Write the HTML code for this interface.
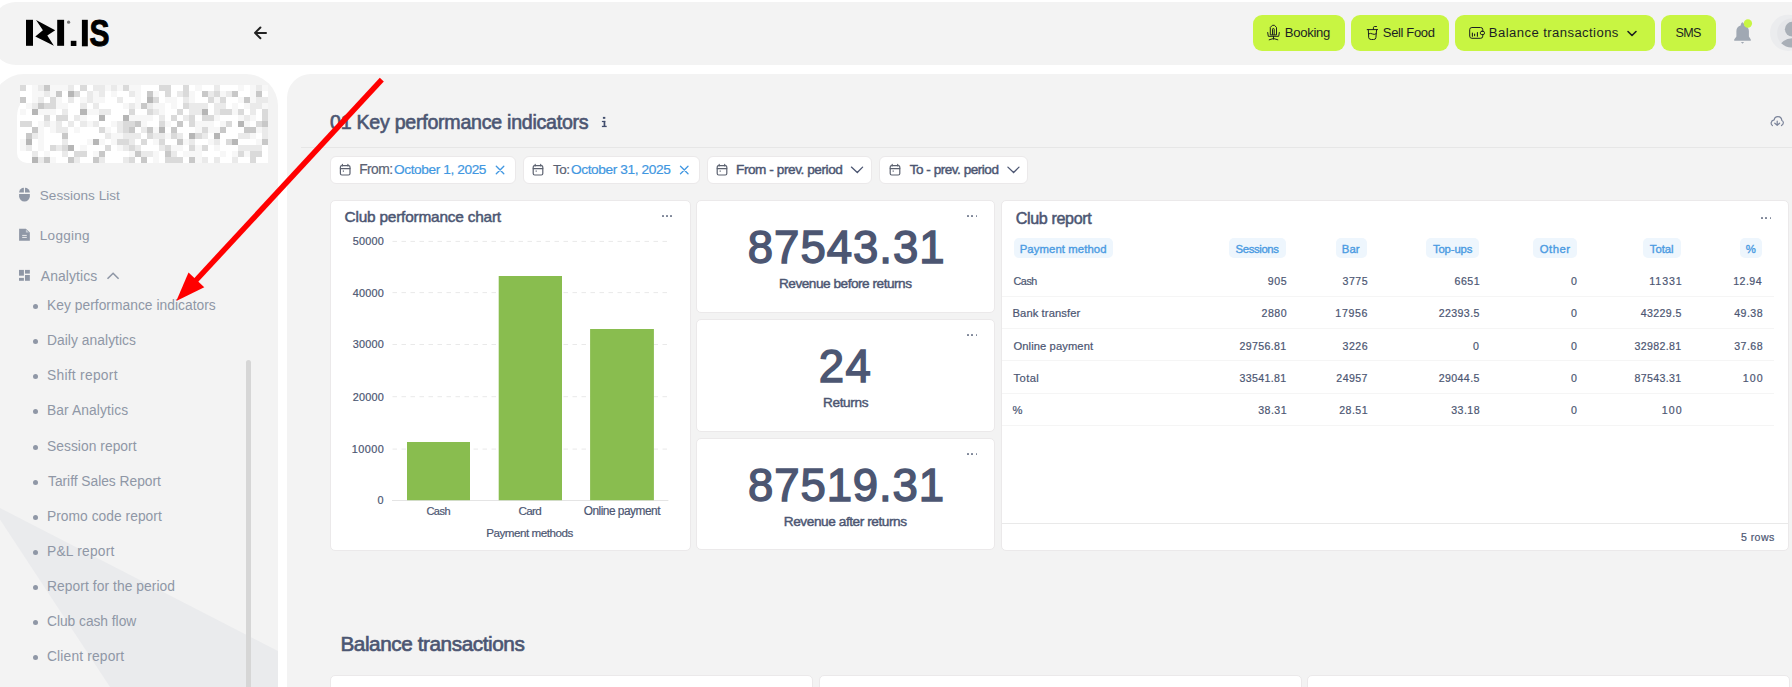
<!DOCTYPE html>
<html><head><meta charset="utf-8"><style>
html,body{margin:0;padding:0}
body{width:1792px;height:687px;overflow:hidden;position:relative;background:#fff;font-family:"Liberation Sans",sans-serif}
.t{position:absolute;white-space:nowrap;font-family:"Liberation Sans",sans-serif}
svg{overflow:visible}
</style></head><body>
<div style="position:absolute;left:-8.00px;top:2.00px;width:1838.00px;height:63.00px;background:#f3f3f3;border-radius:24px;"></div>
<div style="position:absolute;left:-8.00px;top:74.00px;width:286.00px;height:826.00px;background:#f3f3f3;border-radius:32px 32px 0 0;"></div>
<svg style="position:absolute;left:0;top:0" width="278" height="687"><polygon points="0,508 278,651 278,687 110,687 0,519.6" fill="#eaebed"/></svg>
<div style="position:absolute;left:287.00px;top:74.00px;width:1613.00px;height:826.00px;background:#f3f3f3;border-radius:24px 0 0 0;"></div>
<svg style="position:absolute;left:0;top:0" width="120" height="60" viewBox="0 0 120 60">
<rect x="26" y="19.8" width="7" height="26" fill="#000"/>
<polygon points="36.05,20.1 55.2,30.3 47.3,35.4 53.9,45.8 35.3,36.4 42.9,30.3" fill="#000"/>
<rect x="57.2" y="19.8" width="6.9" height="26" fill="#000"/>
<circle cx="68.6" cy="22.2" r="1.6" fill="#777"/>
<rect x="70.8" y="40.8" width="5.6" height="5.2" fill="#000"/>
<rect x="81.9" y="19.8" width="5.9" height="26.5" fill="#000"/>
<text x="89.6" y="46.4" font-family="Liberation Sans" font-weight="700" font-size="37.5" fill="#000" stroke="#000" stroke-width="1" textLength="20" lengthAdjust="spacingAndGlyphs">S</text>
</svg>
<svg style="position:absolute;left:0;top:0" width="300" height="60"><path d="M266 32.9H255.5M260.4 27.5L255 32.9L260.4 38.2" stroke="#222" stroke-width="2" fill="none" stroke-linecap="round" stroke-linejoin="round"/></svg>
<div style="position:absolute;left:1253.00px;top:15.00px;width:92.00px;height:36.00px;background:#c8f542;border-radius:9px;"></div>
<div style="position:absolute;left:1351.00px;top:15.00px;width:98.00px;height:36.00px;background:#c8f542;border-radius:9px;"></div>
<div style="position:absolute;left:1455.00px;top:15.00px;width:200.00px;height:36.00px;background:#c8f542;border-radius:9px;"></div>
<div style="position:absolute;left:1661.00px;top:15.00px;width:55.00px;height:36.00px;background:#c8f542;border-radius:9px;"></div>
<svg style="position:absolute;left:0;top:0" width="1792" height="60" fill="none" stroke="#1c1f22" stroke-width="1" stroke-linecap="round" stroke-linejoin="round">
<path d="M1270.3 34.5V27.4L1272.4 25.3H1274.4L1276.5 27.4V34.5Z"/>
<path d="M1272.5 34.5V29.2Q1272.5 28.5 1273.2 28.5H1273.5Q1274.2 28.5 1274.2 29.2V34.5"/>
<path d="M1267.7 32.5L1268.3 36.3H1278.7L1279.3 32.5"/>
<path d="M1273.5 36.3V39.2M1269.2 39.8L1273.5 38.5L1277.8 39.8"/>
<path d="M1367.2 29.6H1377.6M1368.3 29.6L1368.7 37.7Q1369 39.5 1371.4 39.5H1373.6Q1375.8 39.5 1375.9 37.7L1376.6 29.6M1373.3 29.6L1373.5 27.3Q1373.7 26.5 1374.5 26.5H1376.5M1368.6 33.9Q1370.6 32.8 1372.3 33.9Q1374 35 1376.2 33.8"/>
<path d="M1482.8 31.3V29.7A2.2 2.2 0 0 0 1480.6 27.5H1471.9A2.2 2.2 0 0 0 1469.7 29.7V36.1A2.2 2.2 0 0 0 1471.9 38.3H1480.6A2.2 2.2 0 0 0 1482.8 36.1V34.6"/>
<rect x="1480.3" y="31.3" width="4.2" height="3.3" rx="1.5"/>
<path d="M1472.4 33V36.2M1474.6 34V35.6M1477.4 32.5V36.3" stroke-width="1.1"/>
<path d="M1628 31.5L1632 35.5L1636 31.5" stroke-width="1.6"/>
</svg>
<svg style="position:absolute;left:0;top:0" width="1792" height="60">
<defs><clipPath id="av"><circle cx="1791.6" cy="33" r="14.6"/></clipPath></defs>
<path d="M1742.5 22.2C1741.3 22.2 1740.8 24.5 1740.6 25.6C1738 26.4 1736.4 28.3 1736.4 31V36.4L1734.2 39.4V40.7H1750.8V39.4L1748.9 36.4V31C1748.9 28.3 1747.2 26.4 1744.5 25.6C1744.2 24.5 1743.7 22.2 1742.5 22.2Z" fill="#a0a8b3"/>
<path d="M1740.9 42H1744.1L1742.5 43.8Z" fill="#a0a8b3"/>
<circle cx="1747.9" cy="23.5" r="4.15" fill="#c8f542"/>
<circle cx="1788.1" cy="32.8" r="18.1" fill="#ebecee"/>
<circle cx="1791.6" cy="33" r="14.6" fill="#e5e6e9"/>
<g clip-path="url(#av)"><circle cx="1792.3" cy="29.2" r="7.4" fill="#a9afb7"/><ellipse cx="1792.5" cy="47.5" rx="12.6" ry="9.3" fill="#a9afb7"/></g>
</svg>
<svg style="position:absolute;left:0;top:0" width="280" height="170" shape-rendering="crispEdges"><path d="M20 85H268V163H27A10 10 0 0 1 17 153V116Q17.5 108 20 105Z" fill="#fff" shape-rendering="auto"/><rect x="20" y="85" width="6" height="6" fill="rgb(218,218,218)"/><rect x="32" y="85" width="6" height="6" fill="rgb(247,247,247)"/><rect x="38" y="85" width="6" height="6" fill="rgb(234,234,234)"/><rect x="44" y="85" width="6" height="6" fill="rgb(200,200,200)"/><rect x="50" y="85" width="6" height="6" fill="rgb(247,247,247)"/><rect x="56" y="85" width="6" height="6" fill="rgb(247,247,247)"/><rect x="62" y="85" width="6" height="6" fill="rgb(247,247,247)"/><rect x="68" y="85" width="6" height="6" fill="rgb(234,234,234)"/><rect x="80" y="85" width="7" height="6" fill="rgb(218,218,218)"/><rect x="93" y="85" width="6" height="6" fill="rgb(234,234,234)"/><rect x="99" y="85" width="6" height="6" fill="rgb(234,234,234)"/><rect x="105" y="85" width="6" height="6" fill="rgb(247,247,247)"/><rect x="111" y="85" width="6" height="6" fill="rgb(234,234,234)"/><rect x="117" y="85" width="6" height="6" fill="rgb(247,247,247)"/><rect x="123" y="85" width="6" height="6" fill="rgb(218,218,218)"/><rect x="129" y="85" width="6" height="6" fill="rgb(247,247,247)"/><rect x="135" y="85" width="6" height="6" fill="rgb(247,247,247)"/><rect x="159" y="85" width="6" height="6" fill="rgb(218,218,218)"/><rect x="165" y="85" width="6" height="6" fill="rgb(218,218,218)"/><rect x="183" y="85" width="6" height="6" fill="rgb(218,218,218)"/><rect x="195" y="85" width="7" height="6" fill="rgb(247,247,247)"/><rect x="214" y="85" width="6" height="6" fill="rgb(234,234,234)"/><rect x="238" y="85" width="6" height="6" fill="rgb(247,247,247)"/><rect x="250" y="85" width="6" height="6" fill="rgb(247,247,247)"/><rect x="256" y="85" width="6" height="6" fill="rgb(234,234,234)"/><rect x="262" y="85" width="6" height="6" fill="rgb(247,247,247)"/><rect x="32" y="91" width="6" height="6" fill="rgb(247,247,247)"/><rect x="38" y="91" width="6" height="6" fill="rgb(247,247,247)"/><rect x="44" y="91" width="6" height="6" fill="rgb(234,234,234)"/><rect x="50" y="91" width="6" height="6" fill="rgb(247,247,247)"/><rect x="56" y="91" width="6" height="6" fill="rgb(200,200,200)"/><rect x="68" y="91" width="6" height="6" fill="rgb(182,182,182)"/><rect x="74" y="91" width="6" height="6" fill="rgb(218,218,218)"/><rect x="87" y="91" width="6" height="6" fill="rgb(234,234,234)"/><rect x="93" y="91" width="6" height="6" fill="rgb(247,247,247)"/><rect x="99" y="91" width="6" height="6" fill="rgb(234,234,234)"/><rect x="111" y="91" width="6" height="6" fill="rgb(247,247,247)"/><rect x="129" y="91" width="6" height="6" fill="rgb(234,234,234)"/><rect x="135" y="91" width="6" height="6" fill="rgb(247,247,247)"/><rect x="147" y="91" width="6" height="6" fill="rgb(200,200,200)"/><rect x="153" y="91" width="6" height="6" fill="rgb(247,247,247)"/><rect x="165" y="91" width="6" height="6" fill="rgb(218,218,218)"/><rect x="177" y="91" width="6" height="6" fill="rgb(234,234,234)"/><rect x="183" y="91" width="6" height="6" fill="rgb(218,218,218)"/><rect x="189" y="91" width="6" height="6" fill="rgb(247,247,247)"/><rect x="202" y="91" width="6" height="6" fill="rgb(200,200,200)"/><rect x="208" y="91" width="6" height="6" fill="rgb(234,234,234)"/><rect x="214" y="91" width="6" height="6" fill="rgb(218,218,218)"/><rect x="220" y="91" width="6" height="6" fill="rgb(247,247,247)"/><rect x="226" y="91" width="6" height="6" fill="rgb(234,234,234)"/><rect x="232" y="91" width="6" height="6" fill="rgb(200,200,200)"/><rect x="250" y="91" width="6" height="6" fill="rgb(247,247,247)"/><rect x="256" y="91" width="6" height="6" fill="rgb(200,200,200)"/><rect x="20" y="97" width="6" height="6" fill="rgb(200,200,200)"/><rect x="32" y="97" width="6" height="6" fill="rgb(247,247,247)"/><rect x="38" y="97" width="6" height="6" fill="rgb(234,234,234)"/><rect x="50" y="97" width="6" height="6" fill="rgb(218,218,218)"/><rect x="56" y="97" width="6" height="6" fill="rgb(247,247,247)"/><rect x="68" y="97" width="6" height="6" fill="rgb(234,234,234)"/><rect x="80" y="97" width="7" height="6" fill="rgb(247,247,247)"/><rect x="87" y="97" width="6" height="6" fill="rgb(234,234,234)"/><rect x="93" y="97" width="6" height="6" fill="rgb(247,247,247)"/><rect x="99" y="97" width="6" height="6" fill="rgb(247,247,247)"/><rect x="117" y="97" width="6" height="6" fill="rgb(234,234,234)"/><rect x="135" y="97" width="6" height="6" fill="rgb(247,247,247)"/><rect x="147" y="97" width="6" height="6" fill="rgb(182,182,182)"/><rect x="153" y="97" width="6" height="6" fill="rgb(218,218,218)"/><rect x="165" y="97" width="6" height="6" fill="rgb(247,247,247)"/><rect x="171" y="97" width="6" height="6" fill="rgb(247,247,247)"/><rect x="183" y="97" width="6" height="6" fill="rgb(234,234,234)"/><rect x="189" y="97" width="6" height="6" fill="rgb(247,247,247)"/><rect x="208" y="97" width="6" height="6" fill="rgb(218,218,218)"/><rect x="214" y="97" width="6" height="6" fill="rgb(247,247,247)"/><rect x="220" y="97" width="6" height="6" fill="rgb(218,218,218)"/><rect x="238" y="97" width="6" height="6" fill="rgb(247,247,247)"/><rect x="244" y="97" width="6" height="6" fill="rgb(200,200,200)"/><rect x="250" y="97" width="6" height="6" fill="rgb(247,247,247)"/><rect x="256" y="97" width="6" height="6" fill="rgb(234,234,234)"/><rect x="262" y="97" width="6" height="6" fill="rgb(234,234,234)"/><rect x="26" y="103" width="6" height="6" fill="rgb(247,247,247)"/><rect x="32" y="103" width="6" height="6" fill="rgb(234,234,234)"/><rect x="38" y="103" width="6" height="6" fill="rgb(200,200,200)"/><rect x="44" y="103" width="6" height="6" fill="rgb(218,218,218)"/><rect x="50" y="103" width="6" height="6" fill="rgb(218,218,218)"/><rect x="56" y="103" width="6" height="6" fill="rgb(247,247,247)"/><rect x="62" y="103" width="6" height="6" fill="rgb(247,247,247)"/><rect x="80" y="103" width="7" height="6" fill="rgb(234,234,234)"/><rect x="93" y="103" width="6" height="6" fill="rgb(234,234,234)"/><rect x="123" y="103" width="6" height="6" fill="rgb(247,247,247)"/><rect x="129" y="103" width="6" height="6" fill="rgb(234,234,234)"/><rect x="135" y="103" width="6" height="6" fill="rgb(247,247,247)"/><rect x="141" y="103" width="6" height="6" fill="rgb(200,200,200)"/><rect x="147" y="103" width="6" height="6" fill="rgb(234,234,234)"/><rect x="153" y="103" width="6" height="6" fill="rgb(247,247,247)"/><rect x="159" y="103" width="6" height="6" fill="rgb(247,247,247)"/><rect x="171" y="103" width="6" height="6" fill="rgb(247,247,247)"/><rect x="183" y="103" width="6" height="6" fill="rgb(218,218,218)"/><rect x="189" y="103" width="6" height="6" fill="rgb(234,234,234)"/><rect x="195" y="103" width="7" height="6" fill="rgb(234,234,234)"/><rect x="202" y="103" width="6" height="6" fill="rgb(234,234,234)"/><rect x="214" y="103" width="6" height="6" fill="rgb(234,234,234)"/><rect x="220" y="103" width="6" height="6" fill="rgb(234,234,234)"/><rect x="232" y="103" width="6" height="6" fill="rgb(247,247,247)"/><rect x="244" y="103" width="6" height="6" fill="rgb(247,247,247)"/><rect x="250" y="103" width="6" height="6" fill="rgb(234,234,234)"/><rect x="256" y="103" width="6" height="6" fill="rgb(234,234,234)"/><rect x="262" y="103" width="6" height="6" fill="rgb(247,247,247)"/><rect x="20" y="109" width="6" height="6" fill="rgb(247,247,247)"/><rect x="32" y="109" width="6" height="6" fill="rgb(182,182,182)"/><rect x="38" y="109" width="6" height="6" fill="rgb(247,247,247)"/><rect x="44" y="109" width="6" height="6" fill="rgb(247,247,247)"/><rect x="50" y="109" width="6" height="6" fill="rgb(247,247,247)"/><rect x="62" y="109" width="6" height="6" fill="rgb(234,234,234)"/><rect x="80" y="109" width="7" height="6" fill="rgb(182,182,182)"/><rect x="87" y="109" width="6" height="6" fill="rgb(247,247,247)"/><rect x="93" y="109" width="6" height="6" fill="rgb(247,247,247)"/><rect x="99" y="109" width="6" height="6" fill="rgb(234,234,234)"/><rect x="105" y="109" width="6" height="6" fill="rgb(234,234,234)"/><rect x="129" y="109" width="6" height="6" fill="rgb(218,218,218)"/><rect x="147" y="109" width="6" height="6" fill="rgb(218,218,218)"/><rect x="153" y="109" width="6" height="6" fill="rgb(234,234,234)"/><rect x="159" y="109" width="6" height="6" fill="rgb(247,247,247)"/><rect x="177" y="109" width="6" height="6" fill="rgb(218,218,218)"/><rect x="189" y="109" width="6" height="6" fill="rgb(234,234,234)"/><rect x="195" y="109" width="7" height="6" fill="rgb(234,234,234)"/><rect x="202" y="109" width="6" height="6" fill="rgb(182,182,182)"/><rect x="214" y="109" width="6" height="6" fill="rgb(234,234,234)"/><rect x="220" y="109" width="6" height="6" fill="rgb(218,218,218)"/><rect x="226" y="109" width="6" height="6" fill="rgb(218,218,218)"/><rect x="232" y="109" width="6" height="6" fill="rgb(247,247,247)"/><rect x="238" y="109" width="6" height="6" fill="rgb(218,218,218)"/><rect x="250" y="109" width="6" height="6" fill="rgb(234,234,234)"/><rect x="262" y="109" width="6" height="6" fill="rgb(218,218,218)"/><rect x="44" y="115" width="6" height="6" fill="rgb(218,218,218)"/><rect x="56" y="115" width="6" height="6" fill="rgb(218,218,218)"/><rect x="62" y="115" width="6" height="6" fill="rgb(218,218,218)"/><rect x="74" y="115" width="6" height="6" fill="rgb(234,234,234)"/><rect x="80" y="115" width="7" height="6" fill="rgb(247,247,247)"/><rect x="99" y="115" width="6" height="6" fill="rgb(182,182,182)"/><rect x="123" y="115" width="6" height="6" fill="rgb(182,182,182)"/><rect x="129" y="115" width="6" height="6" fill="rgb(247,247,247)"/><rect x="135" y="115" width="6" height="6" fill="rgb(247,247,247)"/><rect x="141" y="115" width="6" height="6" fill="rgb(247,247,247)"/><rect x="147" y="115" width="6" height="6" fill="rgb(247,247,247)"/><rect x="159" y="115" width="6" height="6" fill="rgb(234,234,234)"/><rect x="171" y="115" width="6" height="6" fill="rgb(218,218,218)"/><rect x="183" y="115" width="6" height="6" fill="rgb(234,234,234)"/><rect x="189" y="115" width="6" height="6" fill="rgb(218,218,218)"/><rect x="202" y="115" width="6" height="6" fill="rgb(218,218,218)"/><rect x="208" y="115" width="6" height="6" fill="rgb(218,218,218)"/><rect x="214" y="115" width="6" height="6" fill="rgb(247,247,247)"/><rect x="238" y="115" width="6" height="6" fill="rgb(247,247,247)"/><rect x="244" y="115" width="6" height="6" fill="rgb(234,234,234)"/><rect x="250" y="115" width="6" height="6" fill="rgb(247,247,247)"/><rect x="262" y="115" width="6" height="6" fill="rgb(218,218,218)"/><rect x="20" y="121" width="6" height="6" fill="rgb(218,218,218)"/><rect x="26" y="121" width="6" height="6" fill="rgb(218,218,218)"/><rect x="38" y="121" width="6" height="6" fill="rgb(247,247,247)"/><rect x="44" y="121" width="6" height="6" fill="rgb(234,234,234)"/><rect x="50" y="121" width="6" height="6" fill="rgb(247,247,247)"/><rect x="56" y="121" width="6" height="6" fill="rgb(234,234,234)"/><rect x="68" y="121" width="6" height="6" fill="rgb(234,234,234)"/><rect x="80" y="121" width="7" height="6" fill="rgb(234,234,234)"/><rect x="87" y="121" width="6" height="6" fill="rgb(247,247,247)"/><rect x="93" y="121" width="6" height="6" fill="rgb(234,234,234)"/><rect x="111" y="121" width="6" height="6" fill="rgb(247,247,247)"/><rect x="117" y="121" width="6" height="6" fill="rgb(234,234,234)"/><rect x="123" y="121" width="6" height="6" fill="rgb(218,218,218)"/><rect x="129" y="121" width="6" height="6" fill="rgb(218,218,218)"/><rect x="135" y="121" width="6" height="6" fill="rgb(200,200,200)"/><rect x="141" y="121" width="6" height="6" fill="rgb(247,247,247)"/><rect x="159" y="121" width="6" height="6" fill="rgb(218,218,218)"/><rect x="165" y="121" width="6" height="6" fill="rgb(247,247,247)"/><rect x="177" y="121" width="6" height="6" fill="rgb(200,200,200)"/><rect x="189" y="121" width="6" height="6" fill="rgb(218,218,218)"/><rect x="195" y="121" width="7" height="6" fill="rgb(247,247,247)"/><rect x="202" y="121" width="6" height="6" fill="rgb(247,247,247)"/><rect x="208" y="121" width="6" height="6" fill="rgb(247,247,247)"/><rect x="220" y="121" width="6" height="6" fill="rgb(247,247,247)"/><rect x="226" y="121" width="6" height="6" fill="rgb(218,218,218)"/><rect x="238" y="121" width="6" height="6" fill="rgb(182,182,182)"/><rect x="244" y="121" width="6" height="6" fill="rgb(247,247,247)"/><rect x="256" y="121" width="6" height="6" fill="rgb(218,218,218)"/><rect x="262" y="121" width="6" height="6" fill="rgb(200,200,200)"/><rect x="32" y="127" width="6" height="6" fill="rgb(200,200,200)"/><rect x="38" y="127" width="6" height="6" fill="rgb(247,247,247)"/><rect x="50" y="127" width="6" height="6" fill="rgb(247,247,247)"/><rect x="56" y="127" width="6" height="6" fill="rgb(234,234,234)"/><rect x="62" y="127" width="6" height="6" fill="rgb(234,234,234)"/><rect x="74" y="127" width="6" height="6" fill="rgb(247,247,247)"/><rect x="99" y="127" width="6" height="6" fill="rgb(218,218,218)"/><rect x="105" y="127" width="6" height="6" fill="rgb(247,247,247)"/><rect x="117" y="127" width="6" height="6" fill="rgb(234,234,234)"/><rect x="123" y="127" width="6" height="6" fill="rgb(218,218,218)"/><rect x="129" y="127" width="6" height="6" fill="rgb(200,200,200)"/><rect x="141" y="127" width="6" height="6" fill="rgb(234,234,234)"/><rect x="147" y="127" width="6" height="6" fill="rgb(200,200,200)"/><rect x="153" y="127" width="6" height="6" fill="rgb(247,247,247)"/><rect x="159" y="127" width="6" height="6" fill="rgb(182,182,182)"/><rect x="171" y="127" width="6" height="6" fill="rgb(200,200,200)"/><rect x="195" y="127" width="7" height="6" fill="rgb(247,247,247)"/><rect x="202" y="127" width="6" height="6" fill="rgb(218,218,218)"/><rect x="208" y="127" width="6" height="6" fill="rgb(247,247,247)"/><rect x="214" y="127" width="6" height="6" fill="rgb(247,247,247)"/><rect x="220" y="127" width="6" height="6" fill="rgb(200,200,200)"/><rect x="244" y="127" width="6" height="6" fill="rgb(200,200,200)"/><rect x="250" y="127" width="6" height="6" fill="rgb(200,200,200)"/><rect x="256" y="127" width="6" height="6" fill="rgb(247,247,247)"/><rect x="262" y="127" width="6" height="6" fill="rgb(234,234,234)"/><rect x="26" y="133" width="6" height="6" fill="rgb(200,200,200)"/><rect x="32" y="133" width="6" height="6" fill="rgb(234,234,234)"/><rect x="38" y="133" width="6" height="6" fill="rgb(247,247,247)"/><rect x="62" y="133" width="6" height="6" fill="rgb(200,200,200)"/><rect x="105" y="133" width="6" height="6" fill="rgb(234,234,234)"/><rect x="111" y="133" width="6" height="6" fill="rgb(247,247,247)"/><rect x="117" y="133" width="6" height="6" fill="rgb(247,247,247)"/><rect x="123" y="133" width="6" height="6" fill="rgb(234,234,234)"/><rect x="129" y="133" width="6" height="6" fill="rgb(234,234,234)"/><rect x="135" y="133" width="6" height="6" fill="rgb(234,234,234)"/><rect x="147" y="133" width="6" height="6" fill="rgb(218,218,218)"/><rect x="153" y="133" width="6" height="6" fill="rgb(234,234,234)"/><rect x="159" y="133" width="6" height="6" fill="rgb(234,234,234)"/><rect x="165" y="133" width="6" height="6" fill="rgb(247,247,247)"/><rect x="171" y="133" width="6" height="6" fill="rgb(218,218,218)"/><rect x="177" y="133" width="6" height="6" fill="rgb(234,234,234)"/><rect x="189" y="133" width="6" height="6" fill="rgb(182,182,182)"/><rect x="195" y="133" width="7" height="6" fill="rgb(218,218,218)"/><rect x="202" y="133" width="6" height="6" fill="rgb(234,234,234)"/><rect x="214" y="133" width="6" height="6" fill="rgb(182,182,182)"/><rect x="238" y="133" width="6" height="6" fill="rgb(234,234,234)"/><rect x="244" y="133" width="6" height="6" fill="rgb(234,234,234)"/><rect x="250" y="133" width="6" height="6" fill="rgb(247,247,247)"/><rect x="262" y="133" width="6" height="6" fill="rgb(234,234,234)"/><rect x="20" y="139" width="6" height="6" fill="rgb(247,247,247)"/><rect x="26" y="139" width="6" height="6" fill="rgb(182,182,182)"/><rect x="38" y="139" width="6" height="6" fill="rgb(247,247,247)"/><rect x="62" y="139" width="6" height="6" fill="rgb(234,234,234)"/><rect x="87" y="139" width="6" height="6" fill="rgb(247,247,247)"/><rect x="93" y="139" width="6" height="6" fill="rgb(182,182,182)"/><rect x="99" y="139" width="6" height="6" fill="rgb(247,247,247)"/><rect x="111" y="139" width="6" height="6" fill="rgb(247,247,247)"/><rect x="117" y="139" width="6" height="6" fill="rgb(218,218,218)"/><rect x="123" y="139" width="6" height="6" fill="rgb(218,218,218)"/><rect x="129" y="139" width="6" height="6" fill="rgb(234,234,234)"/><rect x="141" y="139" width="6" height="6" fill="rgb(218,218,218)"/><rect x="153" y="139" width="6" height="6" fill="rgb(247,247,247)"/><rect x="159" y="139" width="6" height="6" fill="rgb(218,218,218)"/><rect x="177" y="139" width="6" height="6" fill="rgb(200,200,200)"/><rect x="183" y="139" width="6" height="6" fill="rgb(247,247,247)"/><rect x="189" y="139" width="6" height="6" fill="rgb(234,234,234)"/><rect x="208" y="139" width="6" height="6" fill="rgb(247,247,247)"/><rect x="214" y="139" width="6" height="6" fill="rgb(234,234,234)"/><rect x="226" y="139" width="6" height="6" fill="rgb(218,218,218)"/><rect x="232" y="139" width="6" height="6" fill="rgb(182,182,182)"/><rect x="256" y="139" width="6" height="6" fill="rgb(247,247,247)"/><rect x="262" y="139" width="6" height="6" fill="rgb(200,200,200)"/><rect x="20" y="145" width="6" height="6" fill="rgb(247,247,247)"/><rect x="26" y="145" width="6" height="6" fill="rgb(234,234,234)"/><rect x="38" y="145" width="6" height="6" fill="rgb(247,247,247)"/><rect x="50" y="145" width="6" height="6" fill="rgb(218,218,218)"/><rect x="56" y="145" width="6" height="6" fill="rgb(234,234,234)"/><rect x="62" y="145" width="6" height="6" fill="rgb(218,218,218)"/><rect x="68" y="145" width="6" height="6" fill="rgb(182,182,182)"/><rect x="80" y="145" width="7" height="6" fill="rgb(247,247,247)"/><rect x="105" y="145" width="6" height="6" fill="rgb(218,218,218)"/><rect x="117" y="145" width="6" height="6" fill="rgb(247,247,247)"/><rect x="123" y="145" width="6" height="6" fill="rgb(234,234,234)"/><rect x="129" y="145" width="6" height="6" fill="rgb(218,218,218)"/><rect x="135" y="145" width="6" height="6" fill="rgb(234,234,234)"/><rect x="159" y="145" width="6" height="6" fill="rgb(234,234,234)"/><rect x="165" y="145" width="6" height="6" fill="rgb(218,218,218)"/><rect x="171" y="145" width="6" height="6" fill="rgb(247,247,247)"/><rect x="177" y="145" width="6" height="6" fill="rgb(247,247,247)"/><rect x="189" y="145" width="6" height="6" fill="rgb(218,218,218)"/><rect x="195" y="145" width="7" height="6" fill="rgb(247,247,247)"/><rect x="202" y="145" width="6" height="6" fill="rgb(218,218,218)"/><rect x="214" y="145" width="6" height="6" fill="rgb(247,247,247)"/><rect x="238" y="145" width="6" height="6" fill="rgb(234,234,234)"/><rect x="244" y="145" width="6" height="6" fill="rgb(234,234,234)"/><rect x="250" y="145" width="6" height="6" fill="rgb(234,234,234)"/><rect x="256" y="145" width="6" height="6" fill="rgb(234,234,234)"/><rect x="32" y="151" width="6" height="6" fill="rgb(234,234,234)"/><rect x="44" y="151" width="6" height="6" fill="rgb(247,247,247)"/><rect x="62" y="151" width="6" height="6" fill="rgb(234,234,234)"/><rect x="74" y="151" width="6" height="6" fill="rgb(218,218,218)"/><rect x="80" y="151" width="7" height="6" fill="rgb(218,218,218)"/><rect x="93" y="151" width="6" height="6" fill="rgb(247,247,247)"/><rect x="99" y="151" width="6" height="6" fill="rgb(200,200,200)"/><rect x="129" y="151" width="6" height="6" fill="rgb(247,247,247)"/><rect x="135" y="151" width="6" height="6" fill="rgb(200,200,200)"/><rect x="141" y="151" width="6" height="6" fill="rgb(234,234,234)"/><rect x="147" y="151" width="6" height="6" fill="rgb(234,234,234)"/><rect x="153" y="151" width="6" height="6" fill="rgb(247,247,247)"/><rect x="165" y="151" width="6" height="6" fill="rgb(200,200,200)"/><rect x="171" y="151" width="6" height="6" fill="rgb(234,234,234)"/><rect x="183" y="151" width="6" height="6" fill="rgb(247,247,247)"/><rect x="189" y="151" width="6" height="6" fill="rgb(247,247,247)"/><rect x="195" y="151" width="7" height="6" fill="rgb(247,247,247)"/><rect x="220" y="151" width="6" height="6" fill="rgb(247,247,247)"/><rect x="232" y="151" width="6" height="6" fill="rgb(247,247,247)"/><rect x="238" y="151" width="6" height="6" fill="rgb(218,218,218)"/><rect x="244" y="151" width="6" height="6" fill="rgb(247,247,247)"/><rect x="250" y="151" width="6" height="6" fill="rgb(218,218,218)"/><rect x="256" y="151" width="6" height="6" fill="rgb(218,218,218)"/><rect x="32" y="157" width="6" height="6" fill="rgb(182,182,182)"/><rect x="38" y="157" width="6" height="6" fill="rgb(234,234,234)"/><rect x="44" y="157" width="6" height="6" fill="rgb(200,200,200)"/><rect x="50" y="157" width="6" height="6" fill="rgb(247,247,247)"/><rect x="68" y="157" width="6" height="6" fill="rgb(200,200,200)"/><rect x="74" y="157" width="6" height="6" fill="rgb(234,234,234)"/><rect x="93" y="157" width="6" height="6" fill="rgb(200,200,200)"/><rect x="99" y="157" width="6" height="6" fill="rgb(234,234,234)"/><rect x="123" y="157" width="6" height="6" fill="rgb(234,234,234)"/><rect x="129" y="157" width="6" height="6" fill="rgb(218,218,218)"/><rect x="141" y="157" width="6" height="6" fill="rgb(200,200,200)"/><rect x="153" y="157" width="6" height="6" fill="rgb(247,247,247)"/><rect x="165" y="157" width="6" height="6" fill="rgb(218,218,218)"/><rect x="171" y="157" width="6" height="6" fill="rgb(218,218,218)"/><rect x="177" y="157" width="6" height="6" fill="rgb(218,218,218)"/><rect x="189" y="157" width="6" height="6" fill="rgb(200,200,200)"/><rect x="195" y="157" width="7" height="6" fill="rgb(247,247,247)"/><rect x="202" y="157" width="6" height="6" fill="rgb(234,234,234)"/><rect x="214" y="157" width="6" height="6" fill="rgb(234,234,234)"/><rect x="232" y="157" width="6" height="6" fill="rgb(234,234,234)"/><rect x="250" y="157" width="6" height="6" fill="rgb(218,218,218)"/></svg>
<svg style="position:absolute;left:0;top:0" width="278" height="300" fill="#8f97a6">
<path d="M19.1 192.6A4.8 4.8 0 0 1 23.9 187.8V192.6Z"/>
<path d="M25 187.8A4.85 4.8 0 0 1 29.85 192.6H25Z"/>
<path d="M19.1 193.9H29.85V196.2A5.375 5.3 0 0 1 19.1 196.2Z"/>
<path d="M19.1 228.8H25.85L29.85 232.5V240.8H19.1Z"/>
<path d="M25.85 229.6V232.5H28.9Z" fill="#c7ccd4"/>
<path d="M22.2 235.4H26.8M22.2 237.4H26.8" stroke="#f3f3f3" stroke-width="0.9"/>
<rect x="19" y="269.9" width="4.9" height="5.8"/><rect x="19" y="277.9" width="4.9" height="2.9"/>
<rect x="25" y="269.9" width="4.85" height="3.7"/><rect x="25" y="275" width="4.85" height="5.8"/>
<path d="M107.5 278.8L113.1 273.3L118.6 278.8" stroke="#8f97a6" stroke-width="1.6" fill="none"/>
</svg>
<div style="position:absolute;left:32.9px;top:304.00px;width:5px;height:5px;border-radius:50%;background:#8f97a6"></div>
<div style="position:absolute;left:32.9px;top:339.13px;width:5px;height:5px;border-radius:50%;background:#8f97a6"></div>
<div style="position:absolute;left:32.9px;top:374.26px;width:5px;height:5px;border-radius:50%;background:#8f97a6"></div>
<div style="position:absolute;left:32.9px;top:409.39px;width:5px;height:5px;border-radius:50%;background:#8f97a6"></div>
<div style="position:absolute;left:32.9px;top:444.52px;width:5px;height:5px;border-radius:50%;background:#8f97a6"></div>
<div style="position:absolute;left:32.9px;top:479.65px;width:5px;height:5px;border-radius:50%;background:#8f97a6"></div>
<div style="position:absolute;left:32.9px;top:514.78px;width:5px;height:5px;border-radius:50%;background:#8f97a6"></div>
<div style="position:absolute;left:32.9px;top:549.91px;width:5px;height:5px;border-radius:50%;background:#8f97a6"></div>
<div style="position:absolute;left:32.9px;top:585.04px;width:5px;height:5px;border-radius:50%;background:#8f97a6"></div>
<div style="position:absolute;left:32.9px;top:620.17px;width:5px;height:5px;border-radius:50%;background:#8f97a6"></div>
<div style="position:absolute;left:32.9px;top:655.30px;width:5px;height:5px;border-radius:50%;background:#8f97a6"></div>
<div style="position:absolute;left:246.00px;top:360.00px;width:5.00px;height:340.00px;background:#d6d6d6;border-radius:2.5px;"></div>
<div style="position:absolute;left:301.00px;top:146.50px;width:1491.00px;height:1.00px;background:#e6e6e6;border-radius:0px;"></div>
<svg style="position:absolute;left:0;top:0" width="700" height="140" fill="#404c6c"><rect x="602.9" y="116.9" width="2.4" height="1.9"/><rect x="601.9" y="120.9" width="3.4" height="1.2"/><rect x="603.6" y="120.9" width="1.7" height="6.1"/><rect x="601.9" y="125.8" width="4.8" height="1.3"/></svg>
<svg style="position:absolute;left:0;top:0" width="1792" height="140" fill="none" stroke="#7b849a" stroke-width="1.2" stroke-linecap="round" stroke-linejoin="round"><path d="M1772.4 125.6C1770.5 124.5 1770.5 120.5 1774.2 119.8C1774.8 115.5 1781.5 115.5 1781.8 120.5C1783.5 121 1784.3 123.5 1781.5 125.6"/><path d="M1777.2 121V125.2M1774.8 123.2L1777.2 125.3L1779.6 123.2"/></svg>
<div style="position:absolute;left:330.00px;top:156.00px;width:186.00px;height:28.00px;background:#fff;border-radius:6px;border:1px solid #ebe9ea;box-sizing:border-box"></div>
<div style="position:absolute;left:523.00px;top:156.00px;width:177.00px;height:28.00px;background:#fff;border-radius:6px;border:1px solid #ebe9ea;box-sizing:border-box"></div>
<div style="position:absolute;left:707.00px;top:156.00px;width:165.00px;height:28.00px;background:#fff;border-radius:6px;border:1px solid #ebe9ea;box-sizing:border-box"></div>
<div style="position:absolute;left:879.00px;top:156.00px;width:149.00px;height:28.00px;background:#fff;border-radius:6px;border:1px solid #ebe9ea;box-sizing:border-box"></div>
<svg style="position:absolute;left:0;top:0" width="1100" height="200" fill="none" stroke="#5c6270" stroke-width="1.2" stroke-linecap="round"><rect x="340.4" y="165.6" width="9.6" height="9.4" rx="1.5"/><path d="M340.4 168.6H350.0M342.4 164.4V165.8M347.9 164.4V165.8"/><rect x="342.8" y="170.5" width="1.2" height="1.2" fill="#5c6270" stroke="none"/><rect x="533.2" y="165.6" width="9.6" height="9.4" rx="1.5"/><path d="M533.2 168.6H542.8M535.2 164.4V165.8M540.7 164.4V165.8"/><rect x="535.6" y="170.5" width="1.2" height="1.2" fill="#5c6270" stroke="none"/><rect x="717.2" y="165.6" width="9.6" height="9.4" rx="1.5"/><path d="M717.2 168.6H726.8M719.2 164.4V165.8M724.7 164.4V165.8"/><rect x="719.6" y="170.5" width="1.2" height="1.2" fill="#5c6270" stroke="none"/><rect x="890.2" y="165.6" width="9.6" height="9.4" rx="1.5"/><path d="M890.2 168.6H899.8M892.2 164.4V165.8M897.7 164.4V165.8"/><rect x="892.6" y="170.5" width="1.2" height="1.2" fill="#5c6270" stroke="none"/><path d="M496.3 166.3L503.8 173.7M503.8 166.3L496.3 173.7M680.5 166.3L688 173.7M688 166.3L680.5 173.7" stroke="#4197e1" stroke-width="1.3"/><path d="M851.4 167.1L857.3 172.5L862.6 167.1M1007.9 167.1L1013.6 172.5L1019 167.1" stroke="#4c5672" stroke-width="1.3"/></svg>
<div style="position:absolute;left:330.00px;top:200.00px;width:361.00px;height:351.00px;background:#fff;border-radius:5px;border:1px solid #ebe9ea;box-sizing:border-box"></div>
<div style="position:absolute;left:696.00px;top:200.00px;width:299.00px;height:113.00px;background:#fff;border-radius:5px;border:1px solid #ebe9ea;box-sizing:border-box"></div>
<div style="position:absolute;left:696.00px;top:319.00px;width:299.00px;height:113.00px;background:#fff;border-radius:5px;border:1px solid #ebe9ea;box-sizing:border-box"></div>
<div style="position:absolute;left:696.00px;top:438.00px;width:299.00px;height:112.00px;background:#fff;border-radius:5px;border:1px solid #ebe9ea;box-sizing:border-box"></div>
<div style="position:absolute;left:1001.00px;top:200.00px;width:788.00px;height:351.00px;background:#fff;border-radius:5px;border:1px solid #ebe9ea;box-sizing:border-box"></div>
<div style="position:absolute;left:661.85px;top:215.10px;width:1.8px;height:1.8px;background:#7d8597;border-radius:0.5px"></div>
<div style="position:absolute;left:666.10px;top:215.10px;width:1.8px;height:1.8px;background:#7d8597;border-radius:0.5px"></div>
<div style="position:absolute;left:670.35px;top:215.10px;width:1.8px;height:1.8px;background:#7d8597;border-radius:0.5px"></div>
<div style="position:absolute;left:967.05px;top:215.10px;width:1.8px;height:1.8px;background:#7d8597;border-radius:0.5px"></div>
<div style="position:absolute;left:971.30px;top:215.10px;width:1.8px;height:1.8px;background:#7d8597;border-radius:0.5px"></div>
<div style="position:absolute;left:975.55px;top:215.10px;width:1.8px;height:1.8px;background:#7d8597;border-radius:0.5px"></div>
<div style="position:absolute;left:967.05px;top:334.30px;width:1.8px;height:1.8px;background:#7d8597;border-radius:0.5px"></div>
<div style="position:absolute;left:971.30px;top:334.30px;width:1.8px;height:1.8px;background:#7d8597;border-radius:0.5px"></div>
<div style="position:absolute;left:975.55px;top:334.30px;width:1.8px;height:1.8px;background:#7d8597;border-radius:0.5px"></div>
<div style="position:absolute;left:967.05px;top:453.20px;width:1.8px;height:1.8px;background:#7d8597;border-radius:0.5px"></div>
<div style="position:absolute;left:971.30px;top:453.20px;width:1.8px;height:1.8px;background:#7d8597;border-radius:0.5px"></div>
<div style="position:absolute;left:975.55px;top:453.20px;width:1.8px;height:1.8px;background:#7d8597;border-radius:0.5px"></div>
<div style="position:absolute;left:1761.05px;top:217.00px;width:1.8px;height:1.8px;background:#7d8597;border-radius:0.5px"></div>
<div style="position:absolute;left:1765.30px;top:217.00px;width:1.8px;height:1.8px;background:#7d8597;border-radius:0.5px"></div>
<div style="position:absolute;left:1769.55px;top:217.00px;width:1.8px;height:1.8px;background:#7d8597;border-radius:0.5px"></div>
<svg style="position:absolute;left:0;top:0" width="700" height="560"><line x1="392.5" y1="241.40" x2="668" y2="241.40" stroke="#e9e9e9" stroke-width="1" stroke-dasharray="4.5 4.5"/><line x1="392.5" y1="292.60" x2="668" y2="292.60" stroke="#e9e9e9" stroke-width="1" stroke-dasharray="4.5 4.5"/><line x1="392.5" y1="344.50" x2="668" y2="344.50" stroke="#e9e9e9" stroke-width="1" stroke-dasharray="4.5 4.5"/><line x1="392.5" y1="396.70" x2="668" y2="396.70" stroke="#e9e9e9" stroke-width="1" stroke-dasharray="4.5 4.5"/><line x1="392.5" y1="449.10" x2="668" y2="449.10" stroke="#e9e9e9" stroke-width="1" stroke-dasharray="4.5 4.5"/><line x1="392" y1="500.5" x2="668.4" y2="500.5" stroke="#e4e4e4" stroke-width="1"/><rect x="407.00" y="442.00" width="63.00" height="58.20" fill="#89bd4f"/><rect x="498.70" y="276.00" width="63.30" height="224.20" fill="#89bd4f"/><rect x="590.10" y="329.00" width="63.80" height="171.20" fill="#89bd4f"/></svg>
<div style="position:absolute;left:1013.50px;top:238.00px;width:99.60px;height:19.70px;background:#eef6fd;border-radius:5px;"></div>
<div style="position:absolute;left:1229.30px;top:238.00px;width:56.90px;height:19.70px;background:#eef6fd;border-radius:5px;"></div>
<div style="position:absolute;left:1335.60px;top:238.00px;width:31.50px;height:19.70px;background:#eef6fd;border-radius:5px;"></div>
<div style="position:absolute;left:1425.70px;top:238.00px;width:53.60px;height:19.70px;background:#eef6fd;border-radius:5px;"></div>
<div style="position:absolute;left:1532.60px;top:238.00px;width:44.30px;height:19.70px;background:#eef6fd;border-radius:5px;"></div>
<div style="position:absolute;left:1642.60px;top:238.00px;width:38.30px;height:19.70px;background:#eef6fd;border-radius:5px;"></div>
<div style="position:absolute;left:1739.50px;top:238.00px;width:22.50px;height:19.70px;background:#eef6fd;border-radius:5px;"></div>
<div style="position:absolute;left:1002.00px;top:295.80px;width:772.00px;height:1.00px;background:#f5f5f5;border-radius:0px;"></div>
<div style="position:absolute;left:1002.00px;top:328.10px;width:772.00px;height:1.00px;background:#f5f5f5;border-radius:0px;"></div>
<div style="position:absolute;left:1002.00px;top:360.40px;width:772.00px;height:1.00px;background:#f5f5f5;border-radius:0px;"></div>
<div style="position:absolute;left:1002.00px;top:392.60px;width:772.00px;height:1.00px;background:#f5f5f5;border-radius:0px;"></div>
<div style="position:absolute;left:1002.00px;top:424.80px;width:772.00px;height:1.00px;background:#f5f5f5;border-radius:0px;"></div>
<div style="position:absolute;left:1002.00px;top:523.00px;width:786.00px;height:1.00px;background:#e9e9e9;border-radius:0px;"></div>
<div style="position:absolute;left:330.00px;top:675.00px;width:483.00px;height:85.00px;background:#fff;border-radius:5px;border:1px solid #ebe9ea;box-sizing:border-box"></div>
<div style="position:absolute;left:819.00px;top:675.00px;width:483.00px;height:85.00px;background:#fff;border-radius:5px;border:1px solid #ebe9ea;box-sizing:border-box"></div>
<div style="position:absolute;left:1307.00px;top:675.00px;width:483.00px;height:85.00px;background:#fff;border-radius:5px;border:1px solid #ebe9ea;box-sizing:border-box"></div>
<div class="t" style="left:1284.80px;top:24.90px;font-size:13.08px;line-height:15.70px;font-weight:400;color:#1c1f22;letter-spacing:-0.300px;">Booking</div>
<div class="t" style="left:1382.80px;top:24.90px;font-size:13.03px;line-height:15.64px;font-weight:400;color:#1c1f22;letter-spacing:-0.350px;">Sell Food</div>
<div class="t" style="left:1488.80px;top:25.20px;font-size:13.08px;line-height:15.70px;font-weight:400;color:#1c1f22;letter-spacing:0.432px;">Balance transactions</div>
<div class="t" style="left:1675.40px;top:26.00px;font-size:12.54px;line-height:15.05px;font-weight:400;color:#1c1f22;letter-spacing:-0.600px;">SMS</div>
<div class="t" style="left:39.80px;top:188.20px;font-size:13.52px;line-height:16.22px;font-weight:400;color:#8f97a6;letter-spacing:0.033px;">Sessions List</div>
<div class="t" style="left:39.80px;top:228.30px;font-size:13.52px;line-height:16.22px;font-weight:400;color:#8f97a6;letter-spacing:0.283px;">Logging</div>
<div class="t" style="left:40.80px;top:268.20px;font-size:13.95px;line-height:16.74px;font-weight:400;color:#8f97a6;letter-spacing:0.088px;">Analytics</div>
<div class="t" style="left:47.00px;top:297.10px;font-size:13.81px;line-height:16.57px;font-weight:400;color:#8f97a6;letter-spacing:0.032px;">Key performance indicators</div>
<div class="t" style="left:47.00px;top:332.23px;font-size:13.81px;line-height:16.57px;font-weight:400;color:#8f97a6;letter-spacing:0.057px;">Daily analytics</div>
<div class="t" style="left:47.00px;top:367.36px;font-size:13.81px;line-height:16.57px;font-weight:400;color:#8f97a6;letter-spacing:0.273px;">Shift report</div>
<div class="t" style="left:47.00px;top:402.49px;font-size:13.81px;line-height:16.57px;font-weight:400;color:#8f97a6;letter-spacing:0.108px;">Bar Analytics</div>
<div class="t" style="left:47.00px;top:437.62px;font-size:13.81px;line-height:16.57px;font-weight:400;color:#8f97a6;letter-spacing:0.046px;">Session report</div>
<div class="t" style="left:48.00px;top:472.75px;font-size:13.81px;line-height:16.57px;font-weight:400;color:#8f97a6;letter-spacing:-0.022px;">Tariff Sales Report</div>
<div class="t" style="left:47.00px;top:507.88px;font-size:13.81px;line-height:16.57px;font-weight:400;color:#8f97a6;letter-spacing:0.031px;">Promo code report</div>
<div class="t" style="left:47.00px;top:543.01px;font-size:13.81px;line-height:16.57px;font-weight:400;color:#8f97a6;letter-spacing:0.211px;">P&amp;L report</div>
<div class="t" style="left:47.00px;top:578.14px;font-size:13.81px;line-height:16.57px;font-weight:400;color:#8f97a6;letter-spacing:0.075px;">Report for the period</div>
<div class="t" style="left:47.00px;top:613.27px;font-size:13.81px;line-height:16.57px;font-weight:400;color:#8f97a6;letter-spacing:-0.038px;">Club cash flow</div>
<div class="t" style="left:47.00px;top:648.40px;font-size:13.81px;line-height:16.57px;font-weight:400;color:#8f97a6;letter-spacing:0.158px;">Client report</div>
<div class="t" style="left:330.00px;top:110.50px;font-size:19.62px;line-height:23.54px;font-weight:400;color:#4c5672;letter-spacing:-0.261px;-webkit-text-stroke:0.628px #4c5672;">01 Key performance indicators</div>
<div class="t" style="left:340.40px;top:632.10px;font-size:20.76px;line-height:24.91px;font-weight:400;color:#4c5672;letter-spacing:-0.432px;-webkit-text-stroke:0.664px #4c5672;">Balance transactions</div>
<div class="t" style="left:359.20px;top:160.90px;font-size:13.81px;line-height:16.57px;font-weight:400;color:#5a6273;letter-spacing:-0.550px;-webkit-text-stroke:0.200px #5a6273;">From:</div>
<div class="t" style="left:394.00px;top:161.90px;font-size:13.66px;line-height:16.39px;font-weight:400;color:#4197e1;letter-spacing:-0.393px;-webkit-text-stroke:0.200px #4197e1;">October 1, 2025</div>
<div class="t" style="left:553.00px;top:161.90px;font-size:13.51px;line-height:16.21px;font-weight:400;color:#5a6273;letter-spacing:-0.500px;-webkit-text-stroke:0.200px #5a6273;">To:</div>
<div class="t" style="left:571.00px;top:161.90px;font-size:13.70px;line-height:16.44px;font-weight:400;color:#4197e1;letter-spacing:-0.400px;-webkit-text-stroke:0.200px #4197e1;">October 31, 2025</div>
<div class="t" style="left:736.00px;top:162.10px;font-size:13.60px;line-height:16.32px;font-weight:400;color:#4c5672;letter-spacing:-0.428px;-webkit-text-stroke:0.435px #4c5672;">From - prev. period</div>
<div class="t" style="left:909.70px;top:162.10px;font-size:13.52px;line-height:16.22px;font-weight:400;color:#4c5672;letter-spacing:-0.463px;-webkit-text-stroke:0.433px #4c5672;">To - prev. period</div>
<div class="t" style="left:344.60px;top:207.80px;font-size:15.41px;line-height:18.49px;font-weight:400;color:#4c5672;letter-spacing:-0.214px;-webkit-text-stroke:0.493px #4c5672;">Club performance chart</div>
<div class="t" style="left:352.70px;top:235.30px;font-size:10.89px;line-height:13.07px;font-weight:400;color:#4c5672;letter-spacing:0.200px;-webkit-text-stroke:0.200px #4c5672;">50000</div>
<div class="t" style="left:352.70px;top:286.50px;font-size:10.89px;line-height:13.07px;font-weight:400;color:#4c5672;letter-spacing:0.200px;-webkit-text-stroke:0.200px #4c5672;">40000</div>
<div class="t" style="left:352.70px;top:338.40px;font-size:10.89px;line-height:13.07px;font-weight:400;color:#4c5672;letter-spacing:0.200px;-webkit-text-stroke:0.200px #4c5672;">30000</div>
<div class="t" style="left:352.70px;top:390.60px;font-size:10.89px;line-height:13.07px;font-weight:400;color:#4c5672;letter-spacing:0.200px;-webkit-text-stroke:0.200px #4c5672;">20000</div>
<div class="t" style="left:351.70px;top:443.00px;font-size:10.89px;line-height:13.07px;font-weight:400;color:#4c5672;letter-spacing:0.450px;-webkit-text-stroke:0.200px #4c5672;">10000</div>
<div class="t" style="left:377.50px;top:494.30px;font-size:10.89px;line-height:13.07px;font-weight:400;color:#4c5672;letter-spacing:0.000px;-webkit-text-stroke:0.200px #4c5672;">0</div>
<div class="t" style="left:426.40px;top:505.00px;font-size:11.01px;line-height:13.21px;font-weight:400;color:#4c5672;letter-spacing:-0.467px;-webkit-text-stroke:0.200px #4c5672;">Cash</div>
<div class="t" style="left:518.40px;top:504.00px;font-size:11.66px;line-height:13.99px;font-weight:400;color:#4c5672;letter-spacing:-0.633px;-webkit-text-stroke:0.200px #4c5672;">Card</div>
<div class="t" style="left:583.70px;top:504.00px;font-size:11.86px;line-height:14.23px;font-weight:400;color:#4c5672;letter-spacing:-0.485px;-webkit-text-stroke:0.200px #4c5672;">Online payment</div>
<div class="t" style="left:486.20px;top:526.10px;font-size:11.63px;line-height:13.96px;font-weight:400;color:#4c5672;letter-spacing:-0.471px;-webkit-text-stroke:0.200px #4c5672;">Payment methods</div>
<div class="t" style="left:747.80px;top:220.70px;font-size:45.53px;line-height:54.64px;font-weight:400;color:#4c5672;letter-spacing:0.986px;-webkit-text-stroke:1.457px #4c5672;">87543.31</div>
<div class="t" style="left:779.00px;top:275.60px;font-size:13.61px;line-height:16.33px;font-weight:400;color:#4c5672;letter-spacing:-0.476px;-webkit-text-stroke:0.436px #4c5672;">Revenue before returns</div>
<div class="t" style="left:818.70px;top:339.90px;font-size:45.53px;line-height:54.64px;font-weight:400;color:#4c5672;letter-spacing:1.500px;-webkit-text-stroke:1.457px #4c5672;">24</div>
<div class="t" style="left:822.90px;top:394.80px;font-size:13.60px;line-height:16.32px;font-weight:400;color:#4c5672;letter-spacing:-0.317px;-webkit-text-stroke:0.435px #4c5672;">Returns</div>
<div class="t" style="left:748.00px;top:458.80px;font-size:45.53px;line-height:54.64px;font-weight:400;color:#4c5672;letter-spacing:0.900px;-webkit-text-stroke:1.457px #4c5672;">87519.31</div>
<div class="t" style="left:783.80px;top:513.70px;font-size:13.66px;line-height:16.39px;font-weight:400;color:#4c5672;letter-spacing:-0.440px;-webkit-text-stroke:0.437px #4c5672;">Revenue after returns</div>
<div class="t" style="left:1015.80px;top:209.00px;font-size:16.13px;line-height:19.36px;font-weight:400;color:#4c5672;letter-spacing:-0.380px;-webkit-text-stroke:0.516px #4c5672;">Club report</div>
<div class="t" style="left:1019.70px;top:242.60px;font-size:11.34px;line-height:13.61px;font-weight:400;color:#4b9be2;letter-spacing:0.092px;-webkit-text-stroke:0.363px #4b9be2;">Payment method</div>
<div class="t" style="left:1235.50px;top:242.60px;font-size:11.34px;line-height:13.61px;font-weight:400;color:#4b9be2;letter-spacing:-0.357px;-webkit-text-stroke:0.363px #4b9be2;">Sessions</div>
<div class="t" style="left:1341.80px;top:242.60px;font-size:11.34px;line-height:13.61px;font-weight:400;color:#4b9be2;letter-spacing:0.050px;-webkit-text-stroke:0.363px #4b9be2;">Bar</div>
<div class="t" style="left:1432.90px;top:242.60px;font-size:11.34px;line-height:13.61px;font-weight:400;color:#4b9be2;letter-spacing:-0.133px;-webkit-text-stroke:0.363px #4b9be2;">Top-ups</div>
<div class="t" style="left:1539.80px;top:242.60px;font-size:11.34px;line-height:13.61px;font-weight:400;color:#4b9be2;letter-spacing:0.475px;-webkit-text-stroke:0.363px #4b9be2;">Other</div>
<div class="t" style="left:1649.80px;top:242.60px;font-size:11.34px;line-height:13.61px;font-weight:400;color:#4b9be2;letter-spacing:-0.025px;-webkit-text-stroke:0.363px #4b9be2;">Total</div>
<div class="t" style="left:1745.75px;top:242.60px;font-size:11.34px;line-height:13.61px;font-weight:400;color:#4b9be2;letter-spacing:0.000px;-webkit-text-stroke:0.363px #4b9be2;">%</div>
<div class="t" style="left:1013.50px;top:274.70px;font-size:10.78px;line-height:12.94px;font-weight:400;color:#4c5672;letter-spacing:-0.433px;-webkit-text-stroke:0.200px #4c5672;">Cash</div>
<div class="t" style="left:1267.85px;top:274.70px;font-size:10.61px;line-height:12.73px;font-weight:400;color:#4c5672;letter-spacing:0.575px;-webkit-text-stroke:0.200px #4c5672;">905</div>
<div class="t" style="left:1342.60px;top:274.70px;font-size:10.61px;line-height:12.73px;font-weight:400;color:#4c5672;letter-spacing:0.467px;-webkit-text-stroke:0.200px #4c5672;">3775</div>
<div class="t" style="left:1454.60px;top:274.70px;font-size:10.61px;line-height:12.73px;font-weight:400;color:#4c5672;letter-spacing:0.467px;-webkit-text-stroke:0.200px #4c5672;">6651</div>
<div class="t" style="left:1571.00px;top:274.70px;font-size:10.61px;line-height:12.73px;font-weight:400;color:#4c5672;letter-spacing:0.000px;-webkit-text-stroke:0.200px #4c5672;">0</div>
<div class="t" style="left:1649.35px;top:274.70px;font-size:10.61px;line-height:12.73px;font-weight:400;color:#4c5672;letter-spacing:0.913px;-webkit-text-stroke:0.200px #4c5672;">11331</div>
<div class="t" style="left:1733.30px;top:274.70px;font-size:10.61px;line-height:12.73px;font-weight:400;color:#4c5672;letter-spacing:0.425px;-webkit-text-stroke:0.200px #4c5672;">12.94</div>
<div class="t" style="left:1012.50px;top:307.20px;font-size:11.19px;line-height:13.43px;font-weight:400;color:#4c5672;letter-spacing:0.100px;-webkit-text-stroke:0.200px #4c5672;">Bank transfer</div>
<div class="t" style="left:1261.60px;top:307.20px;font-size:10.61px;line-height:12.73px;font-weight:400;color:#4c5672;letter-spacing:0.467px;-webkit-text-stroke:0.200px #4c5672;">2880</div>
<div class="t" style="left:1335.35px;top:307.20px;font-size:10.61px;line-height:12.73px;font-weight:400;color:#4c5672;letter-spacing:0.663px;-webkit-text-stroke:0.200px #4c5672;">17956</div>
<div class="t" style="left:1438.80px;top:307.20px;font-size:10.61px;line-height:12.73px;font-weight:400;color:#4c5672;letter-spacing:0.367px;-webkit-text-stroke:0.200px #4c5672;">22393.5</div>
<div class="t" style="left:1571.00px;top:307.20px;font-size:10.61px;line-height:12.73px;font-weight:400;color:#4c5672;letter-spacing:0.000px;-webkit-text-stroke:0.200px #4c5672;">0</div>
<div class="t" style="left:1640.80px;top:307.20px;font-size:10.61px;line-height:12.73px;font-weight:400;color:#4c5672;letter-spacing:0.367px;-webkit-text-stroke:0.200px #4c5672;">43229.5</div>
<div class="t" style="left:1734.30px;top:307.20px;font-size:10.61px;line-height:12.73px;font-weight:400;color:#4c5672;letter-spacing:0.425px;-webkit-text-stroke:0.200px #4c5672;">49.38</div>
<div class="t" style="left:1013.50px;top:339.70px;font-size:11.19px;line-height:13.43px;font-weight:400;color:#4c5672;letter-spacing:0.092px;-webkit-text-stroke:0.200px #4c5672;">Online payment</div>
<div class="t" style="left:1239.55px;top:339.70px;font-size:10.61px;line-height:12.73px;font-weight:400;color:#4c5672;letter-spacing:0.350px;-webkit-text-stroke:0.200px #4c5672;">29756.81</div>
<div class="t" style="left:1342.60px;top:339.70px;font-size:10.61px;line-height:12.73px;font-weight:400;color:#4c5672;letter-spacing:0.467px;-webkit-text-stroke:0.200px #4c5672;">3226</div>
<div class="t" style="left:1473.00px;top:339.70px;font-size:10.61px;line-height:12.73px;font-weight:400;color:#4c5672;letter-spacing:0.000px;-webkit-text-stroke:0.200px #4c5672;">0</div>
<div class="t" style="left:1571.00px;top:339.70px;font-size:10.61px;line-height:12.73px;font-weight:400;color:#4c5672;letter-spacing:0.000px;-webkit-text-stroke:0.200px #4c5672;">0</div>
<div class="t" style="left:1634.55px;top:339.70px;font-size:10.61px;line-height:12.73px;font-weight:400;color:#4c5672;letter-spacing:0.350px;-webkit-text-stroke:0.200px #4c5672;">32982.81</div>
<div class="t" style="left:1734.30px;top:339.70px;font-size:10.61px;line-height:12.73px;font-weight:400;color:#4c5672;letter-spacing:0.425px;-webkit-text-stroke:0.200px #4c5672;">37.68</div>
<div class="t" style="left:1013.50px;top:371.90px;font-size:11.19px;line-height:13.43px;font-weight:400;color:#4c5672;letter-spacing:0.425px;-webkit-text-stroke:0.200px #4c5672;">Total</div>
<div class="t" style="left:1239.55px;top:371.90px;font-size:10.61px;line-height:12.73px;font-weight:400;color:#4c5672;letter-spacing:0.350px;-webkit-text-stroke:0.200px #4c5672;">33541.81</div>
<div class="t" style="left:1336.35px;top:371.90px;font-size:10.61px;line-height:12.73px;font-weight:400;color:#4c5672;letter-spacing:0.413px;-webkit-text-stroke:0.200px #4c5672;">24957</div>
<div class="t" style="left:1438.80px;top:371.90px;font-size:10.61px;line-height:12.73px;font-weight:400;color:#4c5672;letter-spacing:0.367px;-webkit-text-stroke:0.200px #4c5672;">29044.5</div>
<div class="t" style="left:1571.00px;top:371.90px;font-size:10.61px;line-height:12.73px;font-weight:400;color:#4c5672;letter-spacing:0.000px;-webkit-text-stroke:0.200px #4c5672;">0</div>
<div class="t" style="left:1634.55px;top:371.90px;font-size:10.61px;line-height:12.73px;font-weight:400;color:#4c5672;letter-spacing:0.350px;-webkit-text-stroke:0.200px #4c5672;">87543.31</div>
<div class="t" style="left:1742.85px;top:371.90px;font-size:10.61px;line-height:12.73px;font-weight:400;color:#4c5672;letter-spacing:1.075px;-webkit-text-stroke:0.200px #4c5672;">100</div>
<div class="t" style="left:1012.45px;top:403.90px;font-size:11.19px;line-height:13.43px;font-weight:400;color:#4c5672;letter-spacing:0.000px;-webkit-text-stroke:0.200px #4c5672;">%</div>
<div class="t" style="left:1258.30px;top:403.90px;font-size:10.61px;line-height:12.73px;font-weight:400;color:#4c5672;letter-spacing:0.425px;-webkit-text-stroke:0.200px #4c5672;">38.31</div>
<div class="t" style="left:1339.30px;top:403.90px;font-size:10.61px;line-height:12.73px;font-weight:400;color:#4c5672;letter-spacing:0.425px;-webkit-text-stroke:0.200px #4c5672;">28.51</div>
<div class="t" style="left:1451.30px;top:403.90px;font-size:10.61px;line-height:12.73px;font-weight:400;color:#4c5672;letter-spacing:0.425px;-webkit-text-stroke:0.200px #4c5672;">33.18</div>
<div class="t" style="left:1571.00px;top:403.90px;font-size:10.61px;line-height:12.73px;font-weight:400;color:#4c5672;letter-spacing:0.000px;-webkit-text-stroke:0.200px #4c5672;">0</div>
<div class="t" style="left:1661.85px;top:403.90px;font-size:10.61px;line-height:12.73px;font-weight:400;color:#4c5672;letter-spacing:1.075px;-webkit-text-stroke:0.200px #4c5672;">100</div>
<div class="t" style="left:1741.10px;top:530.80px;font-size:10.61px;line-height:12.73px;font-weight:400;color:#4c5672;letter-spacing:0.380px;-webkit-text-stroke:0.200px #4c5672;">5 rows</div>
<svg style="position:absolute;left:0;top:0" width="400" height="320"><line x1="381.8" y1="79.6" x2="193" y2="283.5" stroke="#ff0000" stroke-width="5.5"/><polygon points="176.3,301.1 188.5,272.6 204.3,287.2" fill="#ff0000"/></svg>
</body></html>
